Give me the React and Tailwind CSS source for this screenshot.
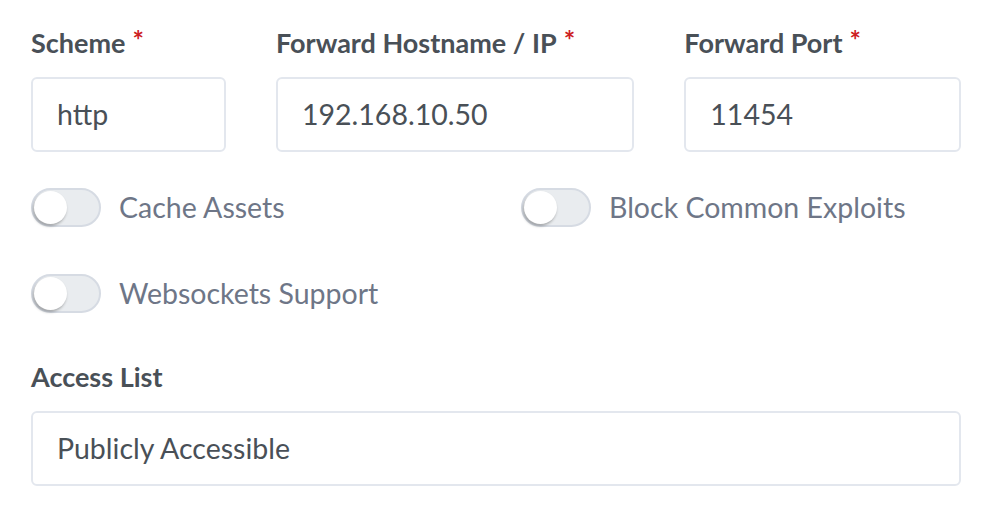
import React, { useState } from 'react'

function Label({ children, required }) {
  return (
    <label className="block h-[34px] mb-[17px] text-[27px] leading-[34px] font-bold text-[#495057]">
      {children}
      {required && <span className="text-[#cd201f] ml-[7px] relative top-[-3px]">*</span>}
    </label>
  )
}

function Field({ value }) {
  return (
    <div className="h-[75px] w-full border-2 border-[#e3e7ee] rounded-[6px] bg-white px-[24px] flex items-center text-[28.5px] text-[#495057]">
      {value}
    </div>
  )
}

function Toggle({ label }) {
  const [on, setOn] = useState(false)
  return (
    <button onClick={() => setOn(!on)} className="flex items-center gap-[18px] h-[39px]">
      <span className={"relative w-[70px] h-[39px] rounded-full border-2 border-[#d6dbe3] " + (on ? "bg-[#467fcf]" : "bg-[#e9ecef]")}>
        <span className={"absolute top-[1px] w-[33px] h-[33px] rounded-full bg-white shadow-[-1px_2px_3px_rgba(0,0,0,0.3)] " + (on ? "left-[32px]" : "left-[1px]")} />
      </span>
      <span className="text-[28.5px] leading-[39px] text-[#6e7687]">{label}</span>
    </button>
  )
}

export default function App() {
  return (
    <div className="w-[988px] h-[524px] bg-white pl-[31px] pr-[27px] pt-[26px]" style={{ fontFamily: 'Lato, "Noto Sans", sans-serif' }}>
      <div className="grid grid-cols-12 gap-x-[50px]">
        <div className="col-span-3">
          <Label required>Scheme</Label>
          <Field value="http" />
        </div>
        <div className="col-span-5">
          <Label required>Forward Hostname / IP</Label>
          <Field value="192.168.10.50" />
        </div>
        <div className="col-span-4">
          <Label required>Forward Port</Label>
          <Field value="11454" />
        </div>
      </div>

      <div className="grid grid-cols-2 gap-x-[50px] gap-y-[47px] mt-[36px]">
        <Toggle label="Cache Assets" />
        <Toggle label="Block Common Exploits" />
        <Toggle label="Websockets Support" />
      </div>

      <div className="mt-[47px]">
        <Label>Access List</Label>
        <Field value="Publicly Accessible" />
      </div>
    </div>
  )
}
